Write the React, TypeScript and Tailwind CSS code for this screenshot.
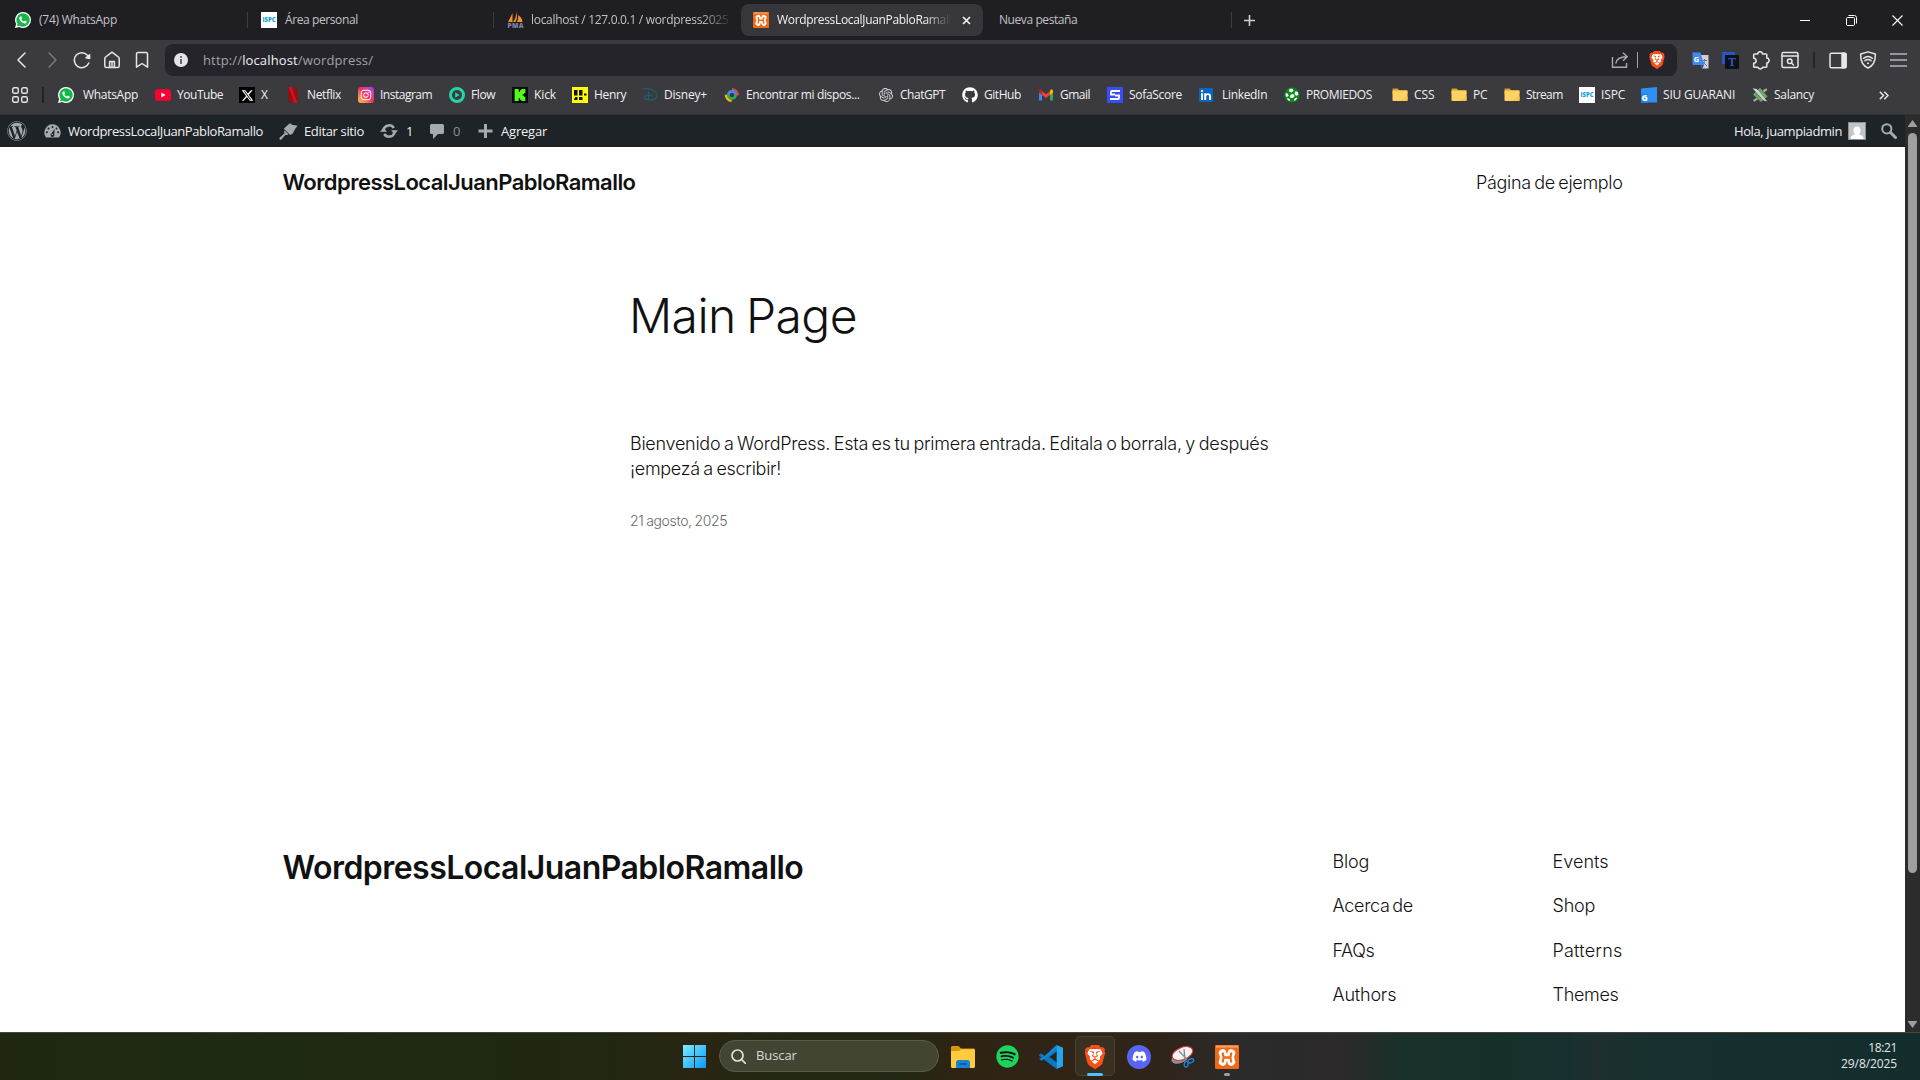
import React from "react";
import type { ReactNode } from "react";
import { FaDiscord, FaGithub, FaSpotify, FaWordpress, FaXTwitter, FaInstagram } from "react-icons/fa6";
import { SiBrave, SiKick, SiOpenai } from "react-icons/si";

/* ---------- brand and favicon drawings ---------- */

function WhatsAppIcon() {
  return (
    <svg width="16" height="16" viewBox="0 0 16 16">
      <path d="M8 0a8 8 0 0 1 0 16 8 8 0 0 1-3.8-1L0 16l1.1-4A8 8 0 0 1 8 0z" fill="#fff" />
      <path d="M8 1.3a6.7 6.7 0 1 1-3.5 12.4L1.9 14.3l.7-2.5A6.7 6.7 0 0 1 8 1.3z" fill="#12b84a" />
      <path
        d="M5.6 4.2c.3-.1.7 0 .8.3l.6 1.4c.1.2 0 .4-.1.6l-.6.7c.6 1.1 1.500 1.900 2.600 2.400l.7-.8c.2-.2.4-.2.6-.1l1.300.7c.3.2.4.4.3.7-.3 1-1.200 1.600-2.200 1.500-2.700-.5-4.800-2.500-5.300-5 0-1 .5-2 1.300-2.400z"
        fill="#fff"
      />
    </svg>
  );
}

function IspcIcon() {
  return (
    <svg width="16" height="16" viewBox="0 0 16 16">
      <rect width="16" height="16" fill="#fff" />
      <text x="8" y="10.300" textAnchor="middle" fontFamily="Open Sans, sans-serif" fontWeight="800" fontSize="6.200" textLength="13" lengthAdjust="spacingAndGlyphs" fill="#1ba0dc">
        ISPC
      </text>
    </svg>
  );
}

function PhpMyAdminIcon() {
  return (
    <svg className="overflow-visible" width="17" height="16" viewBox="0 0 17 16">
      <path d="M5.500 1 1 10h4.500zM9.500 0c.8 3 .7 7-1 10H6c2.300-3 3.300-6.500 3.500-10zM11 3c3 2 4.500 4.500 4.500 7H10c1.200-2.200 1.400-4.500 1-7z" fill="#f0912b" />
      <text x="8.500" y="15.600" textAnchor="middle" fontFamily="Open Sans, sans-serif" fontWeight="800" fontSize="6.500" textLength="16" fill="#8286ad">
        PMA
      </text>
    </svg>
  );
}

function XamppIcon({ size = 16 }: { size?: number }) {
  return (
    <svg width={size} height={size} viewBox="0 0 24 24" fill="none" strokeLinecap="round" strokeLinejoin="round">
      <rect width="24" height="24" rx="1.200" fill="#f06a14" />
      <rect x="1" y="0.600" width="22" height="2" fill="#f8a066" />
      <path d="M7.800 8.300Q10.300 12.500 7.800 16.700M16.200 8.300Q13.700 12.500 16.200 16.700M9 12.500h6" stroke="#fff" strokeWidth="8" />
      <path d="M12 2.500v5.700M12 22.500v-5.700" stroke="#f06a14" strokeWidth="1" />
      <path d="M7.800 8.500Q9.400 12.500 7.800 16.500M16.200 8.500Q14.600 12.500 16.200 16.500M9 12.500h6" stroke="#f06a14" strokeWidth="2.300" />
    </svg>
  );
}

function YouTubeIcon() {
  return (
    <svg width="16" height="16" viewBox="0 0 16 16">
      <rect y="2.300" width="16" height="11.400" rx="2.800" fill="#ff0033" />
      <path d="M6.400 5.600 10.600 8l-4.200 2.400z" fill="#fff" />
    </svg>
  );
}

function NetflixIcon() {
  return (
    <svg width="16" height="16" viewBox="0 0 16 16">
      <path d="M3.500 0H6.500V16H3.500zM9.500 0H12.500V16H9.500z" fill="#a3060f" />
      <path d="M3.500 0H6.500L12.500 16H9.500z" fill="#e50914" />
    </svg>
  );
}

function InstagramIcon() {
  return (
    <span className="flex size-4 items-center justify-center rounded-[3px] bg-linear-to-tr from-[#fdc23a] via-[#f52a5c] to-[#a32df0] text-white">
      <FaInstagram size={12} />
    </span>
  );
}

function FlowIcon() {
  return (
    <svg width="16" height="16" viewBox="0 0 16 16">
      <circle cx="8" cy="8" r="6.500" fill="none" stroke="#22d6a4" strokeWidth="3" />
      <path d="M6.200 5.200 10.600 8l-4.400 2.800z" fill="#22d6a4" />
    </svg>
  );
}

function HenryIcon() {
  return (
    <svg width="16" height="16" viewBox="0 0 16 16">
      <rect width="16" height="16" fill="#ffff01" />
      <path d="M2 3h3.500v5.500H2zM7 3h3.500v5.500H7zM3 10h2.500v3H2v-1.500h1zM7 10h3.500v3H7zM12 6.500h2.500V8.500H12z" fill="#111" />
    </svg>
  );
}

function DisneyIcon() {
  return (
    <svg width="16" height="16" viewBox="0 0 16 16" fill="none" stroke="#1a6170" strokeLinecap="round">
      <path d="M.6 2.200C6 .6 15 3.500 15 8.600c0 3.600-5 5-9 4.200-2.700-.6-4.200-1.800-3.800-2.900.5-1.400 4.200-1.800 7.600-1.200" strokeWidth="1.200" />
      <path d="M6.600 5.500v7" strokeWidth="1.500" />
    </svg>
  );
}

function FindDeviceIcon() {
  return (
    <svg width="16" height="16" viewBox="0 0 16 16" fill="none" strokeWidth="2.600">
      <path d="M8 2.200A6 6 0 0 1 13.600 8.500" stroke="#e94335" />
      <path d="M2 7.800A6 6 0 0 0 7.600 13.800" stroke="#fabb05" />
      <circle cx="8" cy="8" r="3.600" stroke="#34a853" />
      <path d="M4.400 8A3.600 3.600 0 0 1 11.600 8" stroke="#4285f4" />
    </svg>
  );
}

function GmailIcon() {
  return (
    <svg width="16" height="16" viewBox="0 0 16 16">
      <path d="M1 4v9.500h3V7z" fill="#4285f4" />
      <path d="M15 4v9.500h-3V7z" fill="#34a853" />
      <path d="M12 4.500V8l3-2.300V4c0-1.500-1.500-2-2.500-1.300z" fill="#fbbc04" />
      <path d="M4 4.500V8L1 5.700V4c0-1.500 1.500-2 2.500-1.300z" fill="#c5221f" />
      <path d="M4 8V4.100L8 7.200l4-3.100V8l-4 3z" fill="#ea4335" />
    </svg>
  );
}

function SofaScoreIcon() {
  return (
    <svg width="16" height="16" viewBox="0 0 16 16">
      <rect width="16" height="16" fill="#374df5" />
      <path d="M13 4H5a1 1 0 0 0-1 1v2.500h4M3 12h8a1 1 0 0 0 1-1V8.500H8" fill="none" stroke="#fff" strokeWidth="1.900" />
    </svg>
  );
}

function LinkedInIcon() {
  return (
    <svg width="16" height="16" viewBox="0 0 16 16">
      <rect x="1" y="1" width="14" height="14" rx="1" fill="#0a66c2" />
      <path d="M3.100 6.300H5V13H3.100zM6.200 6.300H8v.9c.9-1.600 5-1.700 5 1.800v4h-1.900V9.500c0-2.100-2.900-2-2.900 0V13h-2z" fill="#fff" />
      <circle cx="4.050" cy="4.100" r="1.150" fill="#fff" />
    </svg>
  );
}

function FootballIcon() {
  return (
    <svg width="16" height="16" viewBox="0 0 16 16">
      <circle cx="8" cy="8" r="7.500" fill="#0a8a1c" />
      <g fill="#fff">
        <path d="M5.500 1.800h3l1 2.200-2.200 1.600L5 4.400zM11.600 4.300l2.300.8.5 3-2.400.6-1.500-1.900zM1.600 6.200l2.200.2.900 2.300-1.700 1.400-1.300-.8zM7 7.500l2.300-.4 1.300 2-1.600 1.900H6.600L5.800 9.200zM10.600 11.400l2-1 .6 1.200-2.200 2.200-1.200-.6zM3.600 11l2 .9.500 2-1.500-.4-1.600-1.600z" />
      </g>
    </svg>
  );
}

function FolderIcon() {
  return (
    <svg width="16" height="16" viewBox="0 0 16 16">
      <path d="M.5 2.500c0-.6.400-1 1-1h4.200l1.500 1.700h7.300c.6 0 1 .4 1 1V7H.5z" fill="#d9a023" />
      <rect x="0.500" y="3.600" width="15" height="10.300" rx="1" fill="#ffd263" />
      <path d="M8 13.900h6.500c.6 0 1-.4 1-1V9z" fill="#fcc646" />
    </svg>
  );
}

function SiuIcon() {
  return (
    <svg className="overflow-visible" width="16" height="16" viewBox="0 0 16 16">
      <path d="M0 1.500 16 0v15.500H0z" fill="#2e90f5" />
      <rect y="6.500" width="7" height="9.500" fill="#1d82f0" />
      <text x="0.600" y="14.200" fontFamily="Open Sans, sans-serif" fontWeight="800" fontSize="8.500" fill="#fff">
        G
      </text>
    </svg>
  );
}

function SalancyIcon() {
  return (
    <svg width="16" height="16" viewBox="0 0 16 16">
      <path d="M8 .8 15.500 9.500 9 15 1 7.600z" fill="#6ea564" />
      <path d="m5 5.500 5 5.500" stroke="#4a7d45" strokeWidth="2" />
      <path d="M.5 1.200 4.800 2l7.500 9 3 3.600-3.500-1L4.500 5.500z" fill="#cfd5da" />
      <path d="m1 13 4-2.200 1 1.500-3.700 2.400zM11 3l3.500-1.700.6 2L12 5.600z" fill="#9fb59b" />
    </svg>
  );
}

/** Orange Brave shield with the lion cut-outs showing white. */
function BraveIcon({ size = 16 }: { size?: number }) {
  return (
    <span className="relative flex items-center justify-center text-[#fb4f18]">
      <svg className="absolute" width={size} height={size} viewBox="0 0 24 24">
        <path d="M6 4h12l2 5-3 9-5 4-5-4-3-9z" fill="#fff" />
      </svg>
      <SiBrave className="relative" size={size} />
    </span>
  );
}

/* ---------- tab strip ---------- */

const inactiveText = "text-[12px] text-[#c2c2c6] whitespace-nowrap";

function TabDivider() {
  return <span className="ml-auto h-4 w-px bg-[#3d3c42]" />;
}

function TabStrip() {
  return (
    <div className="flex h-10 bg-[#1f1e23] pl-0.5">
      <div className="flex w-[246px] items-center gap-2 pl-[13px]">
        <WhatsAppIcon />
        <span className={`${inactiveText} tracking-[-0.25px]`}>(74) WhatsApp</span>
        <TabDivider />
      </div>
      <div className="flex w-[246px] items-center gap-2 pl-[13px]">
        <IspcIcon />
        <span className={`${inactiveText} tracking-[-0.4px]`}>Área personal</span>
        <TabDivider />
      </div>
      <div className="flex w-[246px] items-center gap-[7px] pl-[13px]">
        <PhpMyAdminIcon />
        <span className={`${inactiveText} w-[198px] overflow-hidden tracking-[-0.31px] [mask-image:linear-gradient(to_right,#000_170px,transparent_202px)]`}>
          localhost / 127.0.0.1 / wordpress2025
        </span>
      </div>
      <div className="mt-1 ml-px flex h-8 w-[242px] items-center gap-2 rounded-lg bg-[#37363b] pl-3">
        <XamppIcon />
        <span className="w-[174px] overflow-hidden text-[12px] tracking-[-0.33px] whitespace-nowrap text-[#f2f2f4] [mask-image:linear-gradient(to_right,#000_148px,transparent_174px)]">
          WordpressLocalJuanPabloRamallo
        </span>
        <svg className="ml-[3px]" width="9" height="9" viewBox="0 0 9 9" stroke="#f2f2f4" strokeWidth="1.700">
          <path d="m1 1 7 7M8 1 1 8" />
        </svg>
      </div>
      <div className="flex w-[249px] items-center pl-4">
        <span className={`${inactiveText} tracking-[-0.42px]`}>Nueva pestaña</span>
        <TabDivider />
      </div>
      <div className="flex w-[35px] items-center justify-center">
        <svg width="11" height="11" viewBox="0 0 11 11" stroke="#d0d0d4" strokeWidth="1.600">
          <path d="M5.500 0v11M0 5.500h11" />
        </svg>
      </div>
      <div className="ml-auto flex w-[138px]">
        <div className="flex w-[46px] items-center justify-center">
          <span className="h-px w-2.5 bg-white" />
        </div>
        <div className="flex w-[46px] items-center justify-center">
          <svg width="11" height="11" viewBox="0 0 11 11" fill="none" stroke="#fff">
            <rect x="0.500" y="2.500" width="8" height="8" rx="1.200" />
            <path d="M2.500.5h5.800a2.200 2.200 0 0 1 2.200 2.200v5.800" />
          </svg>
        </div>
        <div className="flex w-[46px] items-center justify-center">
          <svg width="11" height="11" viewBox="0 0 11 11" stroke="#fff" strokeWidth="1.100">
            <path d="m.5.5 10 10M10.500.5l-10 10" />
          </svg>
        </div>
      </div>
    </div>
  );
}

/* ---------- toolbar ---------- */

function Cell({ children }: { children: ReactNode }) {
  return <div className="flex w-[30px] items-center justify-center">{children}</div>;
}

const stroke = { fill: "none", stroke: "#e6e6ea", strokeWidth: 1.5, strokeLinecap: "round", strokeLinejoin: "round" } as const;

function Toolbar() {
  return (
    <div className="flex h-10 bg-[#3b3a3f] pl-[7px]">
      <Cell>
        <svg width="18" height="18" viewBox="0 0 18 18" {...stroke}><path d="M12 2 5 9l7 7" /></svg>
      </Cell>
      <Cell>
        <svg width="18" height="18" viewBox="0 0 18 18" {...stroke} stroke="#7a797f"><path d="m6 2 7 7-7 7" /></svg>
      </Cell>
      <Cell>
        <svg width="18" height="18" viewBox="0 0 18 18" {...stroke}>
          <path d="M14.800 4.600a7.500 7.500 0 1 0 1 7.400" />
          <path d="M13 6.800 16.600 3.800v3.600z" fill="#e6e6ea" />
        </svg>
      </Cell>
      <Cell>
        <svg width="18" height="18" viewBox="0 0 18 18" {...stroke}>
          <path d="M1.800 7.600a2 2 0 0 1 .8-1.600L8 1.800a1.600 1.600 0 0 1 2 0L15.400 6a2 2 0 0 1 .8 1.600V15a1.600 1.600 0 0 1-1.600 1.600H3.400A1.600 1.600 0 0 1 1.800 15zM6.600 16.500v-6h4.800v6M9 11v5" />
        </svg>
      </Cell>
      <Cell>
        <svg width="18" height="18" viewBox="0 0 18 18" {...stroke}>
          <path d="M3.500 3a1.500 1.500 0 0 1 1.500-1.500h8A1.500 1.500 0 0 1 14.500 3v13.200L9 12.500l-5.500 3.700z" />
        </svg>
      </Cell>
      <div className="mt-1 ml-2 flex h-8 w-[1512px] items-center rounded-lg bg-[#25242a] pl-[9px]">
        <svg width="14" height="14" viewBox="0 0 14 14">
          <circle cx="7" cy="7" r="7" fill="#e4e4e8" />
          <path d="M6.200 3h1.600v1.700H6.200zM6.200 6h1.600v5H6.200z" fill="#4a494f" />
        </svg>
        <span className="ml-[15px] pt-0.5 text-[13px] tracking-[0.14px] text-[#a3a2a8]">
          http://<span className="text-[#f0f0f3]">localhost</span>/wordpress/
        </span>
        <svg className="ml-auto" width="18" height="18" viewBox="0 0 18 18" fill="none" stroke="#acabb0" strokeWidth="1.400">
          <path d="M1.500 6v10.300h14V12M4.800 12.500C5.300 8.500 8 5.800 16 5.800M12 1.800l4.200 4-4.200 4" />
        </svg>
        <span className="ml-2 h-4 w-px bg-[#a3a2a8]" />
        <div className="mr-[11px] ml-2.5">
          <BraveIcon size={18} />
        </div>
      </div>
      <div className="ml-2 flex">
        <Cell>
          <svg width="17" height="17" viewBox="0 0 17 17">
            <path d="M8 3h8.500v13.500H10z" fill="#cfd1d6" />
            <path d="M10 8.500h5M12.500 7v1.500c0 2-1.500 3.500-2.500 4.500M11 10l4 4" stroke="#57768f" strokeWidth="1" fill="none" />
            <path d="M.5.500h8L12 13H1.500a1 1 0 0 1-1-1z" fill="#4688f1" />
            <path d="m8.500 13 2 3.500L12 13z" fill="#2d57b0" />
            <text x="1.700" y="9.500" fontFamily="Open Sans, sans-serif" fontWeight="700" fontSize="7.500" fill="#fff">G</text>
          </svg>
        </Cell>
        <Cell>
          <svg width="17" height="17" viewBox="0 0 17 17">
            <path d="M0 0h13v3H3.500v9H0z" fill="#2a56c6" />
            <rect x="3" y="3" width="14" height="14" fill="#101116" />
            <text x="10" y="14" textAnchor="middle" fontFamily="Liberation Serif, serif" fontWeight="700" fontSize="12" fill="#2c57c0">T</text>
          </svg>
        </Cell>
        <Cell>
          <svg width="19" height="19" viewBox="0 0 19 19" {...stroke}>
            <path d="M3.500 3h3.200c.2-3 4.600-3 4.800 0H15a.8.8 0 0 1 .8.800V7c3 .3 3 4.600 0 4.900v3.500a.8.800 0 0 1-.8.800h-3.300c-.4 2.300-4.400 2.300-4.800 0H3.500a.8.800 0 0 1-.8-.8v-3.200c3.300-.2 3.300-4.800 0-5V3.800A.8.800 0 0 1 3.500 3z" />
          </svg>
        </Cell>
        <Cell>
          <svg width="18" height="18" viewBox="0 0 18 18" {...stroke}>
            <rect x="1" y="1.500" width="16" height="15" rx="1.500" />
            <path d="M1 5h16" />
            <circle cx="8.700" cy="10.300" r="2.300" />
            <path d="m10.500 12 2 2" />
          </svg>
        </Cell>
      </div>
      <div className="flex w-[18px] items-center justify-center">
        <span className="h-4 w-0.5 bg-[#232227]" />
      </div>
      <Cell>
        <svg width="18" height="17" viewBox="0 0 18 17" {...stroke}>
          <rect x="1" y="1.200" width="16" height="14.600" rx="1.500" />
          <path d="M13 1.200h3a1 1 0 0 1 1 1v12.600a1 1 0 0 1-1 1h-3z" fill="#e6e6ea" />
        </svg>
      </Cell>
      <Cell>
        <svg width="18" height="18" viewBox="0 0 18 18" {...stroke}>
          <path d="M9 .9 16.300 3c.3 6-.9 11-7.300 14.200C2.600 14 1.400 9 1.700 3z" />
          <path d="M4.600 7.300a7 7 0 0 1 8.800 0M6 9.700a4.700 4.700 0 0 1 6 0" />
          <circle cx="9" cy="12.200" r="1" fill="#e6e6ea" stroke="none" />
        </svg>
      </Cell>
      <Cell>
        <svg width="17" height="14" viewBox="0 0 17 14" stroke="#b5b4ba" strokeWidth="1.600">
          <path d="M0 1h17M0 7h17M0 13h17" />
        </svg>
      </Cell>
    </div>
  );
}

/* ---------- bookmarks bar ---------- */

type Bookmark = { label: string; icon: ReactNode; box: string; text: string };

const bookmarks: Bookmark[] = [
  { label: "WhatsApp", icon: <WhatsAppIcon />, box: "w-[97px] gap-[9px]", text: "tracking-[-0.3px]" },
  { label: "YouTube", icon: <YouTubeIcon />, box: "w-[84px] gap-1.5", text: "tracking-[-0.47px]" },
  { label: "X", icon: <span className="flex size-4 items-center justify-center bg-black text-white"><FaXTwitter size={13} /></span>, box: "w-[46px] gap-1.5", text: "tracking-normal" },
  { label: "Netflix", icon: <NetflixIcon />, box: "w-[73px] gap-1.5", text: "tracking-[-0.35px]" },
  { label: "Instagram", icon: <InstagramIcon />, box: "w-[91px] gap-1.5", text: "tracking-[-0.5px]" },
  { label: "Flow", icon: <FlowIcon />, box: "w-[63px] gap-1.5", text: "tracking-[-0.4px]" },
  { label: "Kick", icon: <span className="flex size-4 items-center justify-center bg-[#0b0b0b] text-[#53fc18]"><SiKick size={12} /></span>, box: "w-[60px] gap-1.5", text: "tracking-[-0.1px]" },
  { label: "Henry", icon: <HenryIcon />, box: "w-[70px] gap-1.5", text: "tracking-[-0.35px]" },
  { label: "Disney+", icon: <DisneyIcon />, box: "w-[82px] gap-1.5", text: "tracking-[-0.2px]" },
  { label: "Encontrar mi dispos...", icon: <FindDeviceIcon />, box: "w-[154px] gap-1.5", text: "tracking-[-0.35px]" },
  { label: "ChatGPT", icon: <span className="flex size-4 items-center justify-center text-[#d6d6d9]"><SiOpenai size={14} /></span>, box: "w-[84px] gap-1.5", text: "tracking-[-0.45px]" },
  { label: "GitHub", icon: <FaGithub size={16} color="#fff" />, box: "w-[76px] gap-1.5", text: "tracking-[-0.45px]" },
  { label: "Gmail", icon: <GmailIcon />, box: "w-[69px] gap-1.5", text: "tracking-[-0.5px]" },
  { label: "SofaScore", icon: <SofaScoreIcon />, box: "w-[91px] gap-1.5", text: "tracking-[-0.3px]" },
  { label: "LinkedIn", icon: <LinkedInIcon />, box: "w-[86px] gap-2", text: "tracking-[-0.32px]" },
  { label: "PROMIEDOS", icon: <FootballIcon />, box: "w-[108px] gap-1.5", text: "tracking-[-0.38px]" },
  { label: "CSS", icon: <FolderIcon />, box: "w-[59px] gap-1.5", text: "tracking-[-0.1px]" },
  { label: "PC", icon: <FolderIcon />, box: "w-[53px] gap-1.5", text: "tracking-[-0.2px]" },
  { label: "Stream", icon: <FolderIcon />, box: "w-[75px] gap-1.5", text: "tracking-[-0.6px]" },
  { label: "ISPC", icon: <IspcIcon />, box: "w-[62px] gap-1.5", text: "tracking-[-0.15px]" },
  { label: "SIU GUARANI", icon: <SiuIcon />, box: "w-[111px] gap-1.5", text: "tracking-[-0.2px]" },
  { label: "Salancy", icon: <SalancyIcon />, box: "w-[72px] gap-1.5", text: "tracking-[-0.3px]" },
];

function BookmarksBar() {
  return (
    <div className="flex h-[35px] items-center border-b border-[#333237] bg-[#3b3a3f] pb-1 pl-3">
      <svg width="16" height="16" viewBox="0 0 16 16" fill="none" stroke="#e6e6ea" strokeWidth="1.400">
        <rect x="0.700" y="0.700" width="5.600" height="5.600" rx="1.600" />
        <rect x="9.700" y="0.700" width="5.600" height="5.600" rx="1.600" />
        <rect x="0.700" y="9.700" width="5.600" height="5.600" rx="1.600" />
        <rect x="9.700" y="9.700" width="5.600" height="5.600" rx="1.600" />
      </svg>
      <span className="mr-3.5 ml-3.5 h-4 w-0.5 bg-[#232227]" />
      {bookmarks.map((b) => (
        <div key={b.label} className={`flex shrink-0 items-center whitespace-nowrap ${b.box}`}>
          <span className="shrink-0">{b.icon}</span>
          <span className={`text-[12px] text-[#f0f0f2] ${b.text}`}>{b.label}</span>
        </div>
      ))}
      <svg className="mr-[31px] ml-auto" width="10" height="9" viewBox="0 0 10 9" fill="none" stroke="#e6e6ea" strokeWidth="1.500">
        <path d="m.8.700 3.700 3.800L.8 8.300M5.300.700 9 4.500 5.300 8.300" />
      </svg>
    </div>
  );
}

/* ---------- WordPress admin bar ---------- */

function AdminBar() {
  return (
    <div className="flex h-8 items-center bg-[#1d2327] pl-[7px] text-[13px] whitespace-nowrap text-[#f0f0f1]">
      <FaWordpress size={20} color="#a7aaad" />
      <svg className="ml-[17px]" width="17" height="14" viewBox="0 0 17 14">
        <path d="M2 13.500A8.300 8.300 0 0 1 8.500.3 8.300 8.300 0 0 1 15 13.500z" fill="#a7aaad" />
        <g fill="#1d2327">
          <circle cx="8.500" cy="2.900" r="1" /><circle cx="4.500" cy="4.500" r="1" /><circle cx="2.900" cy="8.300" r="1" />
          <circle cx="14.100" cy="8.300" r="1" /><circle cx="12.500" cy="4.500" r="1" />
          <path d="m10.500 5-.2 5.500a1.900 1.900 0 1 1-2.900-1z" />
        </g>
        <circle cx="8.400" cy="10.500" r="0.800" fill="#a7aaad" />
      </svg>
      <span className="ml-[7px] w-[195px] pt-0.5 tracking-[-0.4px]">WordpressLocalJuanPabloRamallo</span>
      <svg className="ml-4" width="19" height="17" viewBox="0 0 19 17" fill="#a7aaad">
        <path d="M8.500 2.200 11 .2l2 1.600 5.500 1-2.700 3.600-2.200 4.400-2.400 1.200L4.800 5.800z" />
        <path d="M5.500 7.500 9.600 11.400 8 12l-1.500-.3L2.400 16.500c-1 .8-2.600-.5-1.800-1.700l5-4.500-.7-1.700z" />
      </svg>
      <span className="ml-1.5 w-[60px] pt-0.5 tracking-[-0.35px]">Editar sitio</span>
      <svg className="ml-4" width="18" height="14" viewBox="0 0 18 14">
        <path d="M3.600 5.200A5.700 5.700 0 0 1 13.800 4M14.400 8.800A5.700 5.700 0 0 1 4.200 10" fill="none" stroke="#a7aaad" strokeWidth="2.500" />
        <path d="M0 7.700h7L3.500 3.500zM11 6.300h7l-3.500 4.200z" fill="#a7aaad" />
      </svg>
      <span className="ml-2 w-[7px] pt-0.5">1</span>
      <svg className="ml-[17px]" width="14" height="15" viewBox="0 0 14 15" fill="#a7aaad">
        <path d="M1.500 0h11A1.500 1.500 0 0 1 14 1.500v7a1.500 1.500 0 0 1-1.500 1.500H8l-5 5v-5H1.500A1.500 1.500 0 0 1 0 8.500v-7A1.500 1.500 0 0 1 1.500 0z" />
      </svg>
      <span className="ml-[9px] w-[7px] pt-0.5 text-[#8b8f93]">0</span>
      <svg className="ml-[18px]" width="15" height="14" viewBox="0 0 15 14" stroke="#a7aaad" strokeWidth="3">
        <path d="M7.500 0v14M0.500 7h14" />
      </svg>
      <span className="ml-2 pt-0.5 tracking-[-0.2px]">Agregar</span>
      <span className="ml-auto w-[108px] pt-0.5 tracking-[-0.4px]">Hola, juampiadmin</span>
      <svg className="ml-1.5" width="18" height="18" viewBox="0 0 18 18">
        <rect width="18" height="18" fill="#8c8f94" />
        <rect x="1" y="1" width="16" height="16" fill="#c3c4c6" />
        <path d="M2.500 17c0-3 2-4 4.500-4.500-3-3.500-1.500-8 2-8s5 4.500 2 8c2.500.5 4.500 1.500 4.500 4.500z" fill="#fff" />
      </svg>
      <svg className="mr-2 ml-[15px]" width="16" height="16" viewBox="0 0 16 16" fill="none" stroke="#a7aaad">
        <circle cx="5.800" cy="5.800" r="4.600" strokeWidth="2" />
        <path d="m9.500 9.500 5 5" strokeWidth="3" strokeLinecap="round" />
      </svg>
    </div>
  );
}

/* ---------- site ---------- */

function Site() {
  return (
    <div className="h-[885px] overflow-hidden bg-white pt-[17px] font-['Inter',sans-serif] text-[#111]">
      <header className="mx-auto flex w-[1340px] items-center justify-between">
        <h2 className="text-[22px] leading-9 font-semibold tracking-[-0.54px]">WordpressLocalJuanPabloRamallo</h2>
        <a className="pt-px text-[18px] leading-[35px] font-light tracking-[-0.34px] [word-spacing:-1.2px]">Página de ejemplo</a>
      </header>
      <main className="mx-auto mt-[88px] w-[645px]">
        <h1 className="-ml-px text-[48px] leading-[55px] font-light tracking-[-0.6px] [word-spacing:-2.5px]">Main Page</h1>
        <p className="mt-[88px] text-[18px] leading-[25px] font-light whitespace-nowrap [word-spacing:-1.2px]">
          <span className="tracking-[-0.27px]">Bienvenido a WordPress. Esta es tu primera entrada. Editala o borrala, y después</span>
          <br />
          <span className="tracking-[-0.3px]">¡empezá a escribir!</span>
        </p>
        <p className="mt-[30px] text-[14px] leading-5 font-light tracking-[-0.35px] text-[#686868] [word-spacing:-0.8px]">21 agosto, 2025</p>
      </main>
      <footer className="mx-auto mt-[318px] flex w-[1340px]">
        <h2 className="text-[32px] leading-[37px] font-semibold tracking-[-0.54px]">WordpressLocalJuanPabloRamallo</h2>
        <div className="ml-auto flex text-[18px] leading-[25px] font-light whitespace-nowrap">
          <nav className="flex w-[220px] flex-col gap-[19.4px] tracking-[-0.2px]">
            <a>Blog</a>
            <a className="tracking-[-0.3px] [word-spacing:-2px]">Acerca de</a>
            <a className="tracking-[-0.4px]">FAQs</a>
            <a>Authors</a>
          </nav>
          <nav className="flex w-[70px] flex-col gap-[19.4px] tracking-[0.05px]">
            <a>Events</a>
            <a className="tracking-[-0.2px]">Shop</a>
            <a className="tracking-[0.2px]">Patterns</a>
            <a className="tracking-[-0.3px]">Themes</a>
          </nav>
        </div>
      </footer>
    </div>
  );
}

function Scrollbar() {
  return (
    <div className="flex w-[15px] flex-col items-center bg-[#2c2c2c]">
      <svg className="mt-[5px]" width="9" height="7" viewBox="0 0 9 7"><path d="M4.500 0 9 6.200V7H0v-.8z" fill="#9f9f9f" /></svg>
      <div className="mt-1.5 h-[740px] w-[9px] rounded-full bg-[#9f9f9f]" />
      <svg className="mt-auto mb-1" width="9" height="7" viewBox="0 0 9 7"><path d="M4.500 7 9 .8V0H0v.8z" fill="#9f9f9f" /></svg>
    </div>
  );
}

/* ---------- taskbar ---------- */

function TaskCell({ children }: { children: ReactNode }) {
  return <div className="relative flex h-full w-11 items-center justify-center">{children}</div>;
}

function Taskbar() {
  return (
    <div className="flex h-12 items-center border-t border-[#45463c] bg-[linear-gradient(90deg,#1f2713_0px,#1e2a14_220px,#202713_600px,#292512_700px,#222814_780px,#222614_900px,#2f2413_960px,#302418_1080px,#2f2419_1160px,#2b2b2c_1240px,#2c2a2a_1340px,#1a302a_1400px,#152f2a_1500px,#17302f_1570px,#1f2f2e_1600px,#17302e_1640px,#132d2d_1920px)] pl-[672px]">
      <TaskCell>
        <svg width="23" height="23" viewBox="0 0 23 23">
          <defs>
            <linearGradient id="win" x1="0" y1="0" x2="23" y2="23" gradientUnits="userSpaceOnUse">
              <stop stopColor="#7cedff" />
              <stop offset="1" stopColor="#0a98f8" />
            </linearGradient>
          </defs>
          <path d="M0 0h11v11H0zM12 0h11v11H12zM0 12h11v11H0zM12 12h11v11H12z" fill="url(#win)" />
        </svg>
      </TaskCell>
      <div className="mr-0.5 mb-px ml-[3px] flex h-8 w-[220px] items-center rounded-full border border-[#5a5b4c] bg-[#434533] pl-[11px]">
        <svg width="15" height="15" viewBox="0 0 15 15" fill="none" stroke="#e2e2de" strokeWidth="1.700" strokeLinecap="round">
          <circle cx="6.500" cy="6.500" r="5.500" />
          <path d="m10.500 10.500 3.700 3.700" />
        </svg>
        <span className="ml-2.5 text-[13px] tracking-[-0.1px] text-[#d9d9d4]">Buscar</span>
      </div>
      <TaskCell>
        <svg width="24" height="22" viewBox="0 0 24 22">
          <path d="M0 1.500C0 .7.700 0 1.500 0h6L10 2.500h12.500c.8 0 1.500.7 1.500 1.500v5H0z" fill="#d8960a" />
          <path d="M0 5h8l2-1.700h12.500c.8 0 1.500.6 1.500 1.500V20.500c0 .8-.7 1.500-1.500 1.500h-21A1.500 1.500 0 0 1 0 20.500z" fill="#ffcb3f" />
          <path d="M5 22v-5.500C5 15.100 6.100 14 7.500 14h9c1.400 0 2.500 1.100 2.500 2.500V22z" fill="#1583d8" />
          <rect x="8" y="17" width="8" height="2" rx="1" fill="#0c5ba5" />
        </svg>
      </TaskCell>
      <TaskCell>
        <span className="flex size-[21px] items-center justify-center rounded-full bg-[#111]">
          <FaSpotify size={23} color="#1ed35e" className="shrink-0" />
        </span>
      </TaskCell>
      <TaskCell>
        <svg width="24" height="24" viewBox="0 0 24 24">
          <path d="M17.500 0 5.800 11 2.500 8.500 0 9.700v1L17.500 24z" fill="#0b78c6" />
          <path d="M0 13.800 2.500 15.800 17.500 4.500V0L5 12z" fill="#1389d8" />
          <path d="M17.500 0 24 2.800v18.400L17.500 24z" fill="#24a5f0" />
          <path d="M17.500 6.800v10.400L10.500 12z" fill="#262614" />
        </svg>
      </TaskCell>
      <TaskCell>
        <span className="absolute top-[3px] left-0.5 size-10 rounded-[5px] border border-[#4b4031] bg-[#3a3022]" />
        <span className="relative"><BraveIcon size={24} /></span>
        <span className="absolute bottom-1 left-3.5 h-[3px] w-4 rounded-full bg-[#4cc2ff]" />
      </TaskCell>
      <TaskCell>
        <span className="flex size-6 items-center justify-center rounded-full bg-[#5865f2] text-white">
          <FaDiscord size={15} />
        </span>
      </TaskCell>
      <TaskCell>
        <svg width="24" height="22" viewBox="0 0 24 22">
          <ellipse cx="9" cy="12" rx="9" ry="5" transform="rotate(-22 9 12)" fill="#8f8f92" />
          <ellipse cx="11.500" cy="7.500" rx="10.800" ry="6" transform="rotate(-22 11.500 7.500)" fill="#f4f4f5" stroke="#d8363c" strokeWidth="1" />
          <path d="m8 5 8 8.500M13 3l1 10" stroke="#85858a" strokeWidth="1.300" />
          <ellipse cx="19.800" cy="14.800" rx="3" ry="1.900" transform="rotate(-20 19.800 14.800)" fill="none" stroke="#1c7fd0" strokeWidth="1.500" />
          <ellipse cx="15.200" cy="18.200" rx="1.900" ry="2.900" transform="rotate(12 15.200 18.200)" fill="none" stroke="#1c7fd0" strokeWidth="1.500" />
        </svg>
      </TaskCell>
      <TaskCell>
        <XamppIcon size={24} />
        <span className="absolute bottom-1 left-[19px] h-[3px] w-1.5 rounded-full bg-[#a09f9f]" />
      </TaskCell>
      <div className="mr-[23px] ml-auto flex flex-col items-end pb-px text-[12px] leading-4 text-[#e3e8e8]">
        <span className="tracking-[-0.35px]">18:21</span>
        <span className="tracking-[-0.1px]">29/8/2025</span>
      </div>
    </div>
  );
}

export default function App() {
  return (
    <div className="flex h-[1080px] w-[1920px] flex-col overflow-hidden bg-white font-['Open_Sans','Noto_Sans',sans-serif]">
      <TabStrip />
      <Toolbar />
      <BookmarksBar />
      <div className="flex h-[917px]">
        <div className="w-[1905px]">
          <AdminBar />
          <Site />
        </div>
        <Scrollbar />
      </div>
      <Taskbar />
    </div>
  );
}
